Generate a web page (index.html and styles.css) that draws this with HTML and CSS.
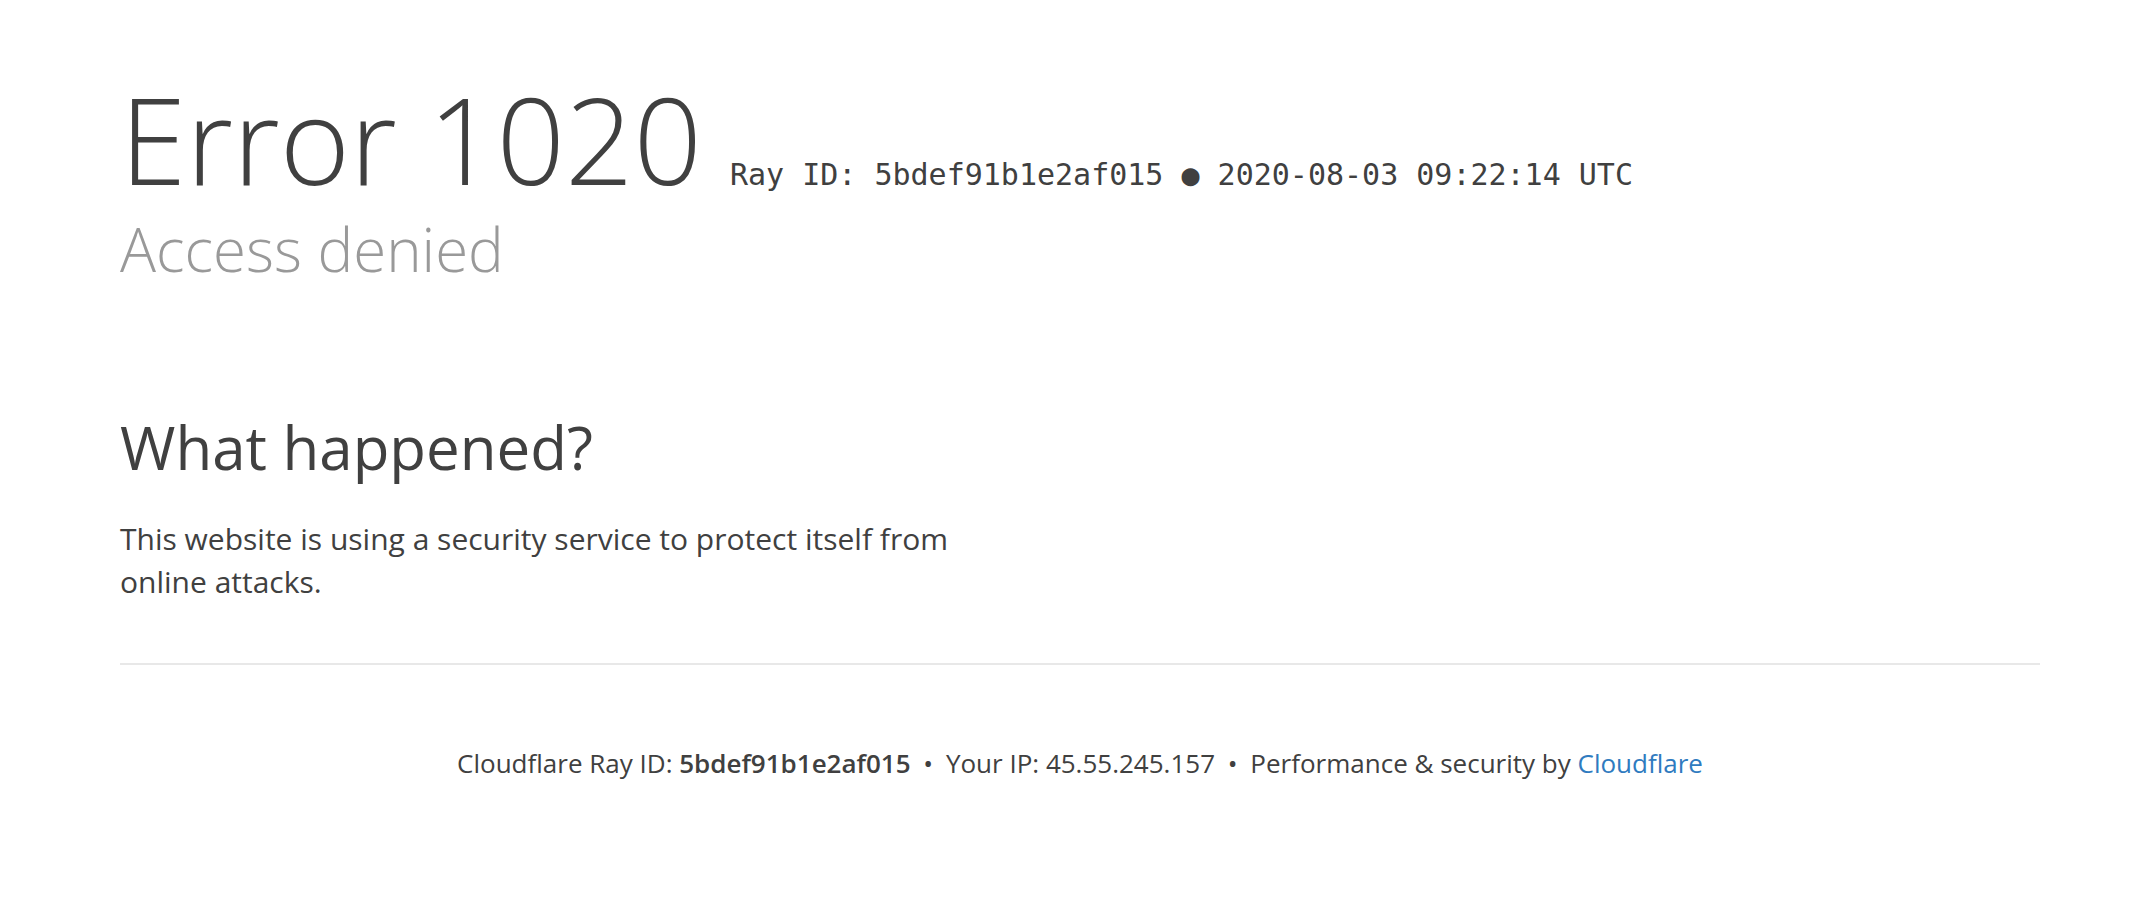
FILE: index.html
```html
<!DOCTYPE html>
<html lang="en">
<head>
<meta charset="utf-8">
<title>Access denied | Cloudflare</title>
<link rel="stylesheet" href="styles.css">
</head>
<body>
<div class="wrapper">
  <header class="header">
    <h1 class="title">
      <span class="error-type">Error 1020</span>
      <span class="ray-meta">Ray ID: 5bdef91b1e2af015 <span class="dot">&#9679;</span> 2020-08-03 09:22:14 UTC</span>
    </h1>
    <h2 class="subheadline">Access denied</h2>
  </header>
  <section class="section">
    <div class="column">
      <h2 class="question">What happened?</h2>
      <p class="text">This website is using a security service to protect itself from online attacks.</p>
    </div>
  </section>
  <footer class="footer">
    <p class="footer-line">
      <span>Cloudflare Ray ID: <strong>5bdef91b1e2af015</strong></span>
      <span class="sep">&bull;</span>
      <span>Your IP: 45.55.245.157</span>
      <span class="sep">&bull;</span>
      <span>Performance &amp; security by <a class="link" href="#">Cloudflare</a></span>
    </p>
  </footer>
</div>
</body>
</html>
```
FILE: styles.css
```css
html, body {
  margin: 0;
  padding: 0;
  background: #ffffff;
}
body {
  font-family: "Open Sans", "Liberation Sans", sans-serif;
  color: #404040;
}
.wrapper {
  width: 1920px;
  padding: 77px 0 0 120px;
}
.header {
  margin: 0;
}
.title {
  display: flex;
  align-items: baseline;
  margin: 0;
  font-weight: 300;
}
.error-type {
  font-size: 120px;
  line-height: 124px;
  font-weight: 300;
  color: #404040;
}
.ray-meta {
  margin-left: 28px;
  font-family: "DejaVu Sans Mono", "Liberation Mono", monospace;
  font-size: 30px;
  font-weight: 400;
  color: #404040;
}
.dot {
  font-family: "DejaVu Sans Mono", monospace;
}
.subheadline {
  margin: 12px 0 0 0;
  font-size: 60px;
  line-height: 72px;
  font-weight: 300;
  color: #999999;
}
.section {
  margin-top: 126px;
}
.column {
  width: 900px;
}
.question {
  margin: 0;
  font-size: 60px;
  line-height: 72px;
  font-weight: 400;
}
.text {
  margin: 34px 0 0 0;
  font-size: 30px;
  line-height: 43px;
}
.footer {
  margin-top: 60px;
  border-top: 2px solid #e8e8e8;
  text-align: center;
  padding-top: 78px;
}
.footer-line {
  margin: 0;
  font-size: 26px;
  line-height: 40px;
}
.footer-line strong {
  font-weight: 600;
}
.sep {
  margin: 0 6px;
}
.link {
  color: #2f7bbf;
  text-decoration: none;
}
```
